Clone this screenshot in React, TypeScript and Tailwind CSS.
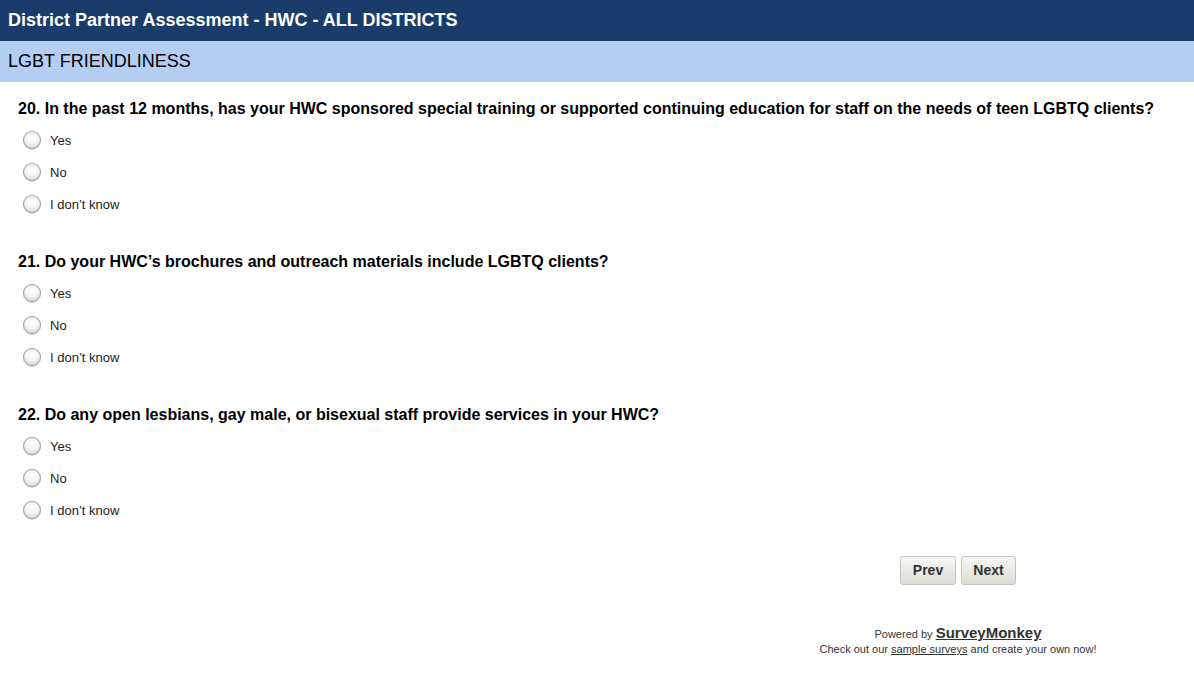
const questions = [
  {
    n: 20,
    text: "In the past 12 months, has your HWC sponsored special training or supported continuing education for staff on the needs of teen LGBTQ clients?",
  },
  { n: 21, text: "Do your HWC\u2019s brochures and outreach materials include LGBTQ clients?" },
  { n: 22, text: "Do any open lesbians, gay male, or bisexual staff provide services in your HWC?" },
];

const options = ["Yes", "No", "I don\u2019t know"];

function Radio() {
  return (
    <span className="block h-[18px] w-[18px] shrink-0 rounded-full border border-[#9a9a9a] bg-[radial-gradient(circle_at_50%_35%,#ffffff_0%,#f4f4f4_45%,#cfcfcf_100%)] shadow-[0_1px_1px_rgba(0,0,0,0.15)]" />
  );
}

export default function App() {
  return (
    <div className="min-h-screen bg-white font-['Liberation_Sans',Arial,sans-serif] text-black">
      <div className="flex h-[41px] items-center bg-[#1a3c6a] px-2 text-[18px] font-bold text-white">
        District Partner Assessment - HWC - ALL DISTRICTS
      </div>
      <div className="flex h-[41px] items-center bg-[#b4cef3] px-2 text-[18px]">LGBT FRIENDLINESS</div>

      <div className="pl-[18px] pt-[11px]">
        {questions.map((q) => (
          <div key={q.n} className="mb-[26px]">
            <div className="flex h-[31px] items-center text-[16px] font-bold">
              {q.n}. {q.text}
            </div>
            {options.map((o) => (
              <label key={o} className="flex h-[32px] items-center gap-[9px] pl-[5px] text-[13px] text-[#222]">
                <Radio />
                <span className="pt-[2px]">{o}</span>
              </label>
            ))}
          </div>
        ))}
      </div>

      <div className="flex justify-end gap-[5px] pr-[178px] pt-[4px]">
        <button className="h-[29px] w-[56px] rounded-[3px] border border-[#c4c4c0] bg-linear-to-b from-[#f7f7f4] to-[#dcdcd6] text-[14px] font-bold text-[#333]">
          Prev
        </button>
        <button className="h-[29px] w-[55px] rounded-[3px] border border-[#c4c4c0] bg-linear-to-b from-[#f7f7f4] to-[#dcdcd6] text-[14px] font-bold text-[#333]">
          Next
        </button>
      </div>

      <div className="flex justify-end pr-[86px] pt-[40px]">
        <div className="w-[300px] text-center text-[11px] text-[#333]">
          <div className="leading-[16px]">
            Powered by{" "}
            <a className="text-[15px] font-bold text-[#333] underline">SurveyMonkey</a>
          </div>
          <div className="leading-[14px]">
            Check out our <a className="underline">sample surveys</a> and create your own now!
          </div>
        </div>
      </div>
    </div>
  );
}
